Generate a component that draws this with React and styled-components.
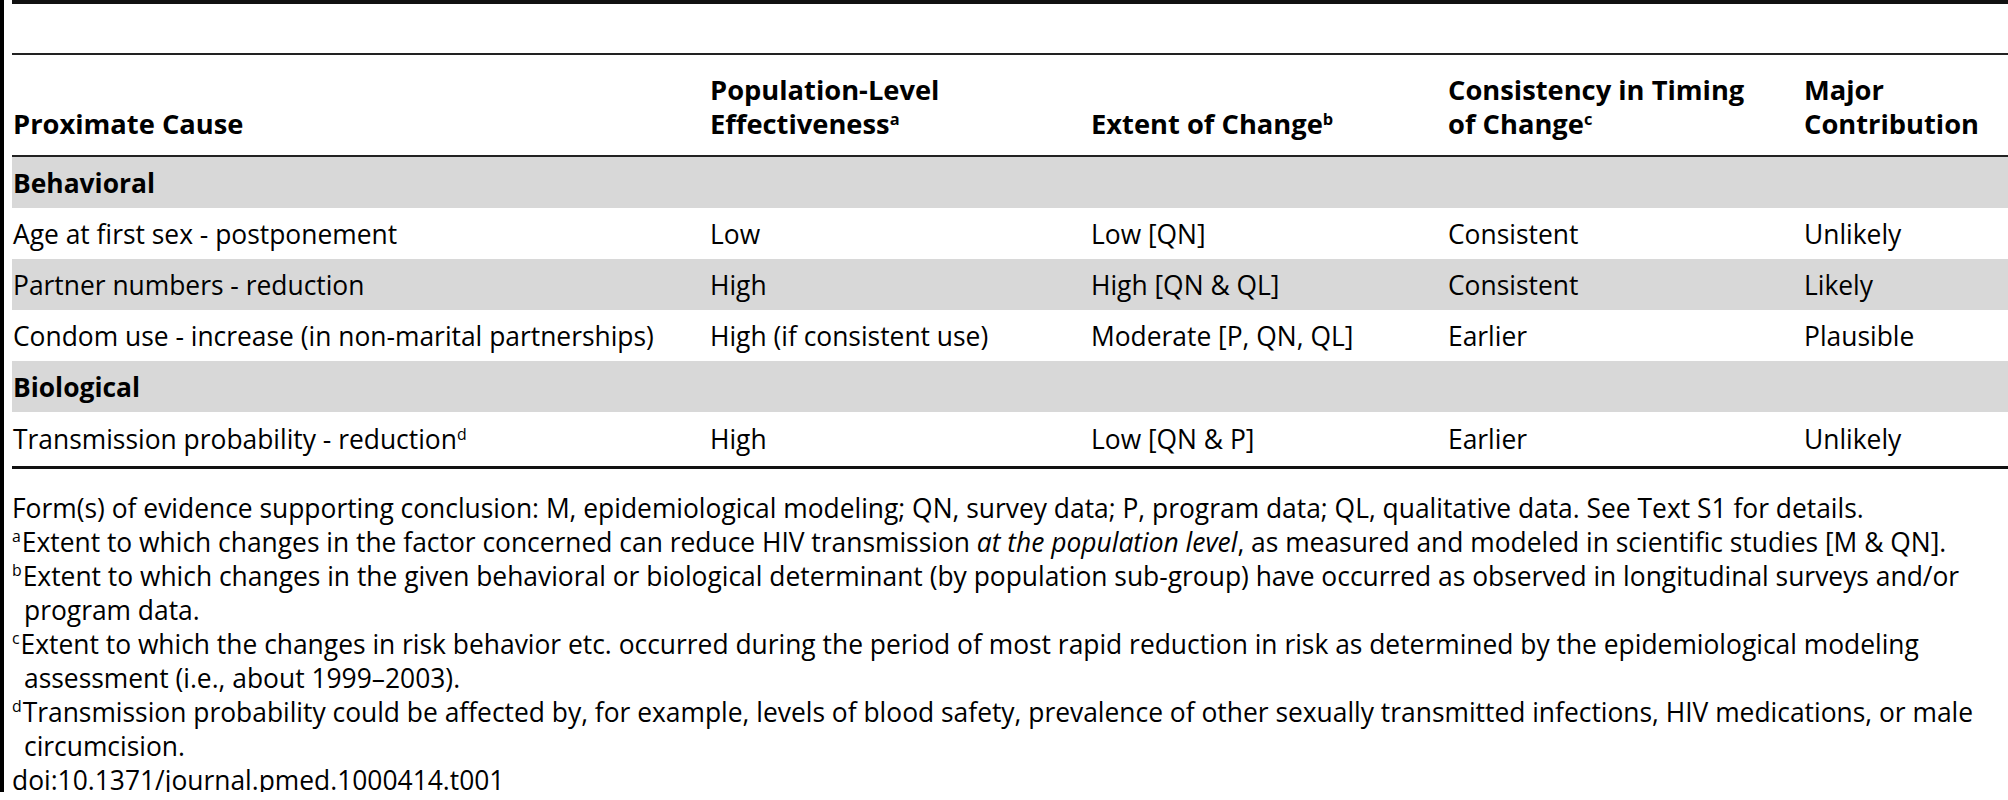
import React from "react";
import styled, { createGlobalStyle } from "styled-components";

const GlobalStyle = createGlobalStyle`
  body {
    margin: 0;
    background: #fff;
    color: #000;
    font-family: "Open Sans", "Noto Sans", sans-serif;
  }
`;

const Frame = styled.div`
  width: 2008px;
  height: 792px;
  box-sizing: border-box;
  border-left: 4px solid #000;
  padding-left: 8px;
`;

const CaptionBand = styled.div`
  height: 49px;
  border-top: 4px solid #111;
`;

const Table = styled.table`
  width: 100%;
  table-layout: fixed;
  border-collapse: collapse;
  border-top: 2px solid #222;
  border-bottom: 3px solid #111;
`;

const Col = styled.col`
  width: ${(p) => p.$w}px;
`;

const HeadCell = styled.th`
  height: 86px;
  padding: 0 0 14px 1px;
  vertical-align: bottom;
  text-align: left;
  font-size: 27.3px;
  line-height: 34px;
  font-weight: 700;
  border-bottom: 2px solid #222;
`;

const Row = styled.tr`
  background: ${(p) => (p.$shade ? "#d8d8d8" : "#fff")};
`;

const Cell = styled.td`
  height: ${(p) => (p.$tall ? 54 : 51)}px;
  padding: 0 0 0 1px;
  vertical-align: middle;
  font-size: 26.4px;
  line-height: 34px;
  font-weight: ${(p) => (p.$group ? 700 : 400)};
  white-space: nowrap;
`;

const Sup = styled.sup`
  font-size: 0.6em;
  line-height: 0;
  vertical-align: 0.58em;
`;

const Notes = styled.div`
  margin-top: 22px;
  font-size: 26.4px;
  line-height: 34px;
`;

const Note = styled.p`
  margin: 0;
  white-space: nowrap;
  padding-left: ${(p) => (p.$hang ? 12 : 0)}px;
  text-indent: ${(p) => (p.$hang ? -12 : 0)}px;
`;

const NoteMark = styled.sup`
  font-size: 0.6em;
  line-height: 0;
  vertical-align: 0.62em;
  margin-right: 1px;
`;

const columns = [697, 381, 357, 356, 205];

const rows = [
  { group: "Behavioral" },
  {
    cause: "Age at first sex - postponement",
    eff: "Low",
    extent: "Low [QN]",
    timing: "Consistent",
    major: "Unlikely",
  },
  {
    cause: "Partner numbers - reduction",
    eff: "High",
    extent: "High [QN & QL]",
    timing: "Consistent",
    major: "Likely",
  },
  {
    cause: "Condom use - increase (in non-marital partnerships)",
    eff: "High (if consistent use)",
    extent: "Moderate [P, QN, QL]",
    timing: "Earlier",
    major: "Plausible",
  },
  { group: "Biological" },
  {
    cause: "Transmission probability - reduction",
    mark: "d",
    eff: "High",
    extent: "Low [QN & P]",
    timing: "Earlier",
    major: "Unlikely",
  },
];

export default function App() {
  return (
    <>
      <GlobalStyle />
      <Frame>
        <CaptionBand />
        <Table>
          <colgroup>
            {columns.map((w, i) => (
              <Col key={i} $w={w} />
            ))}
          </colgroup>
          <thead>
            <tr>
              <HeadCell>Proximate Cause</HeadCell>
              <HeadCell>
                Population-Level
                <br />
                Effectiveness<Sup>a</Sup>
              </HeadCell>
              <HeadCell>
                Extent of Change<Sup>b</Sup>
              </HeadCell>
              <HeadCell>
                Consistency in Timing
                <br />
                of Change<Sup>c</Sup>
              </HeadCell>
              <HeadCell>
                Major
                <br />
                Contribution
              </HeadCell>
            </tr>
          </thead>
          <tbody>
            {rows.map((r, i) =>
              r.group ? (
                <Row key={i} $shade>
                  <Cell $group colSpan={5}>
                    {r.group}
                  </Cell>
                </Row>
              ) : (
                <Row key={i} $shade={i === 2}>
                  <Cell $tall={i === rows.length - 1}>
                    {r.cause}
                    {r.mark && <Sup>{r.mark}</Sup>}
                  </Cell>
                  <Cell>{r.eff}</Cell>
                  <Cell>{r.extent}</Cell>
                  <Cell>{r.timing}</Cell>
                  <Cell>{r.major}</Cell>
                </Row>
              )
            )}
          </tbody>
        </Table>
        <Notes>
          <Note>
            Form(s) of evidence supporting conclusion: M, epidemiological
            modeling; QN, survey data; P, program data; QL, qualitative data.
            See Text S1 for details.
          </Note>
          <Note $hang>
            <NoteMark>a</NoteMark>Extent to which changes in the factor
            concerned can reduce HIV transmission <em>at the population level</em>,
            as measured and modeled in scientific studies [M &amp; QN].
          </Note>
          <Note $hang>
            <NoteMark>b</NoteMark>Extent to which changes in the given
            behavioral or biological determinant (by population sub-group) have
            occurred as observed in longitudinal surveys and/or
            <br />
            program data.
          </Note>
          <Note $hang>
            <NoteMark>c</NoteMark>Extent to which the changes in risk behavior
            etc. occurred during the period of most rapid reduction in risk as
            determined by the epidemiological modeling
            <br />
            assessment (i.e., about 1999–2003).
          </Note>
          <Note $hang>
            <NoteMark>d</NoteMark>Transmission probability could be affected
            by, for example, levels of blood safety, prevalence of other
            sexually transmitted infections, HIV medications, or male
            <br />
            circumcision.
          </Note>
          <Note>doi:10.1371/journal.pmed.1000414.t001</Note>
        </Notes>
      </Frame>
    </>
  );
}
